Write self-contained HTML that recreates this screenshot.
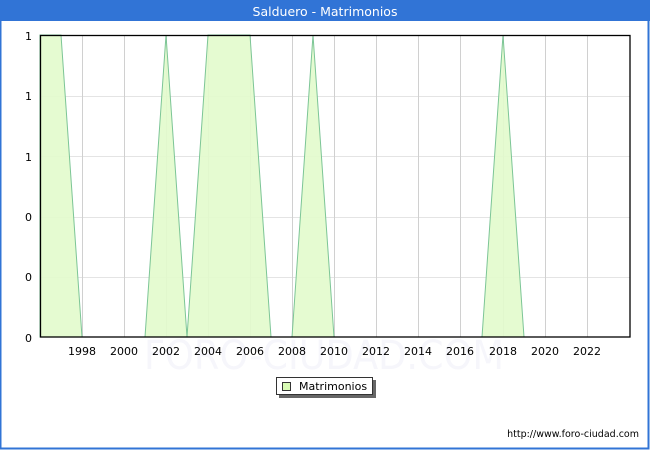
<!DOCTYPE html>
<html><head><style>
html,body{margin:0;padding:0;background:#fff;}
body{width:650px;height:450px;overflow:hidden;}
</style></head><body>
<svg width="650" height="450" xmlns="http://www.w3.org/2000/svg" font-family="DejaVu Sans, sans-serif">
<rect x="0" y="0" width="650" height="450" fill="#fff"/>
<rect x="0.5" y="0.5" width="648" height="448" fill="none" stroke="#3174d6" stroke-width="2"/>
<rect x="0" y="0" width="650" height="21" fill="#3174d6"/>
<text x="325" y="16" font-size="12.5" fill="#fff" text-anchor="middle">Salduero - Matrimonios</text>
<text x="324" y="369" font-size="40" fill="#f6f6fb" text-anchor="middle" textLength="360" lengthAdjust="spacingAndGlyphs">FORO-CIUDAD.COM</text>
<g stroke="#d0d0d0" stroke-width="1">
<line x1="40" y1="96.5" x2="630" y2="96.5" stroke="#e4e4e4"/>
<line x1="40" y1="156.5" x2="630" y2="156.5" stroke="#e4e4e4"/>
<line x1="40" y1="217.5" x2="630" y2="217.5" stroke="#e4e4e4"/>
<line x1="40" y1="277.5" x2="630" y2="277.5" stroke="#e4e4e4"/>
<line x1="82.5" y1="35" x2="82.5" y2="337"/><line x1="124.5" y1="35" x2="124.5" y2="337"/>
<line x1="166.5" y1="35" x2="166.5" y2="337"/><line x1="208.5" y1="35" x2="208.5" y2="337"/>
<line x1="250.5" y1="35" x2="250.5" y2="337"/><line x1="292.5" y1="35" x2="292.5" y2="337"/>
<line x1="334.5" y1="35" x2="334.5" y2="337"/><line x1="376.5" y1="35" x2="376.5" y2="337"/>
<line x1="418.5" y1="35" x2="418.5" y2="337"/><line x1="460.5" y1="35" x2="460.5" y2="337"/>
<line x1="503.5" y1="35" x2="503.5" y2="337"/><line x1="545.5" y1="35" x2="545.5" y2="337"/>
<line x1="587.5" y1="35" x2="587.5" y2="337"/>
</g>
<polygon points="40,337 40,35 61,35 82,337 145,337 166,35 187,337 208,35 250,35 271,337 292,337 313,35 334,337 482,337 503,35 524,337" fill="#e2fbcc" fill-opacity="0.9" stroke="#7cc596" stroke-width="1"/>
<rect x="40.5" y="35.5" width="589.5" height="301.5" fill="none" stroke="#000" stroke-width="1.3"/>
<g font-size="11" fill="#000">
<text x="32" y="40" text-anchor="end">1</text>
<text x="32" y="100" text-anchor="end">1</text>
<text x="32" y="161" text-anchor="end">1</text>
<text x="32" y="221" text-anchor="end">0</text>
<text x="32" y="281" text-anchor="end">0</text>
<text x="32" y="342" text-anchor="end">0</text>
<g text-anchor="middle">
<text x="82" y="355">1998</text><text x="124" y="355">2000</text><text x="166" y="355">2002</text>
<text x="208" y="355">2004</text><text x="250" y="355">2006</text><text x="292" y="355">2008</text>
<text x="334" y="355">2010</text><text x="376" y="355">2012</text><text x="418" y="355">2014</text>
<text x="460" y="355">2016</text><text x="503" y="355">2018</text><text x="545" y="355">2020</text>
<text x="587" y="355">2022</text>
</g>
</g>
<rect x="279" y="380" width="97" height="18" fill="#666"/>
<rect x="276.5" y="377.5" width="96" height="17" fill="#fff" stroke="#333"/>
<rect x="282.5" y="382.5" width="8" height="8" fill="#d8fbb4" stroke="#333"/>
<text x="299" y="390" font-size="11" fill="#000">Matrimonios</text>
<text x="639" y="437" font-size="9.5" fill="#000" text-anchor="end">http://www.foro-ciudad.com</text>
</svg>
</body></html>
